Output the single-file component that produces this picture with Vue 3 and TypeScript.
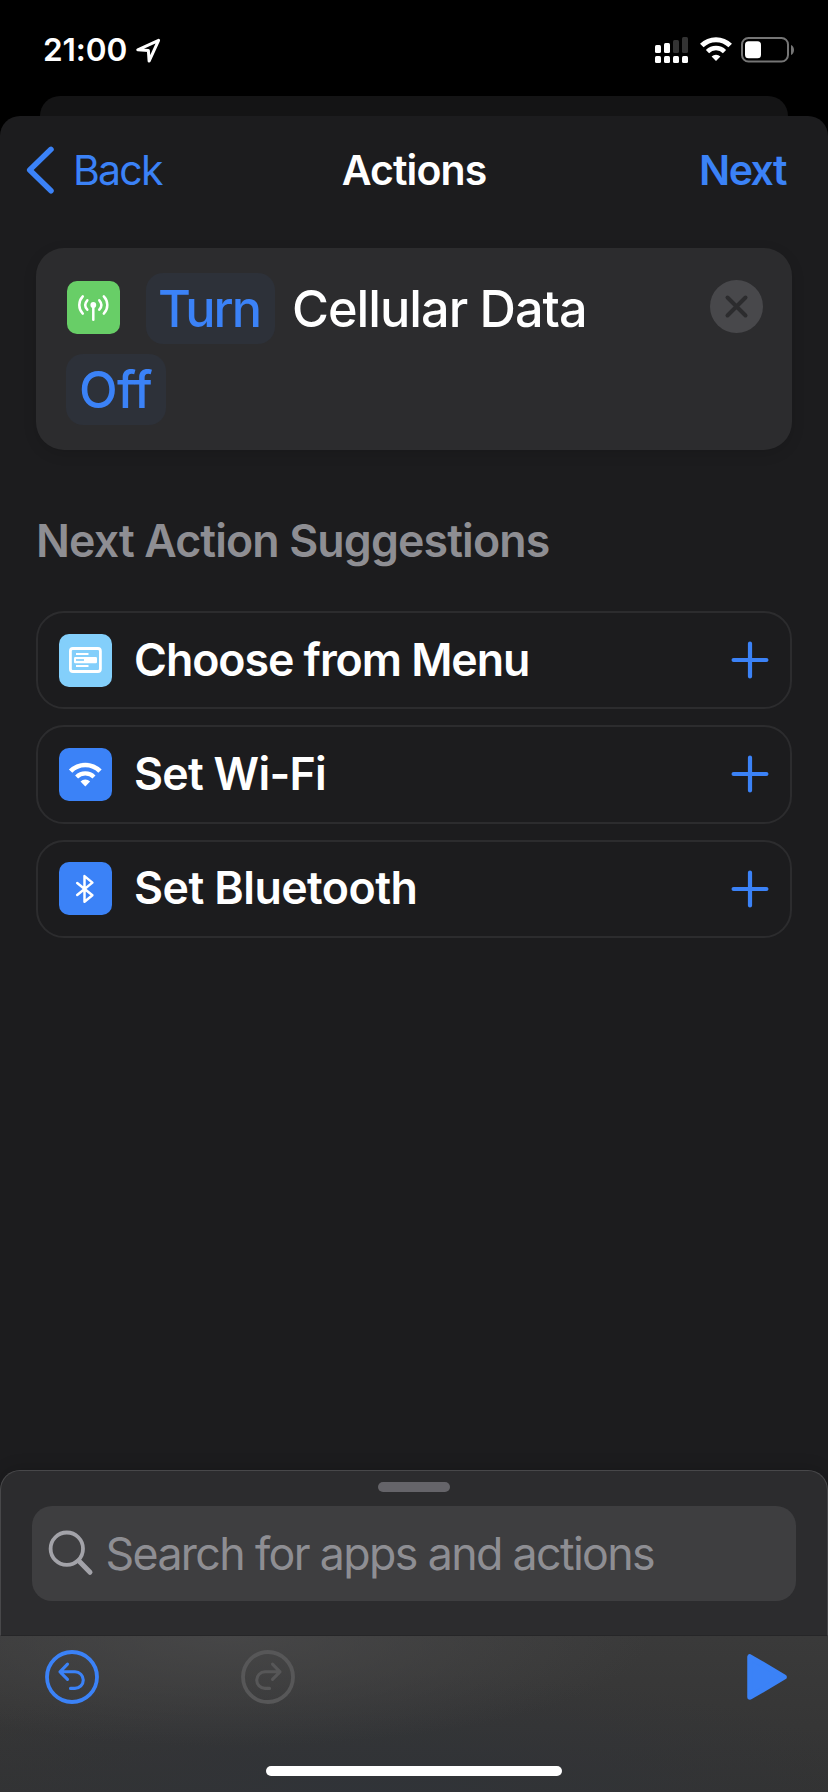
<script setup lang="ts">
type SuggestionIcon = 'menu' | 'wifi' | 'bluetooth'

interface Suggestion {
  id: SuggestionIcon
  label: string
}

const suggestions: Suggestion[] = [
  { id: 'menu', label: 'Choose from Menu' },
  { id: 'wifi', label: 'Set Wi-Fi' },
  { id: 'bluetooth', label: 'Set Bluetooth' },
]

// Four signal strength bars for each of the two SIM lines
const signalBars = [
  { height: 8, active: true },
  { height: 10, active: true },
  { height: 13, active: false },
  { height: 16, active: false },
]
</script>

<template>
  <div class="screen">
    <header class="status">
      <div class="status-left">
        <span class="time">21:00</span>
        <svg class="location" width="28" height="28" viewBox="0 0 28 28">
          <path d="M23.6 3.3 2.8 12.8l10.6.8.7 10.5z" fill="none" stroke="#fff" stroke-width="3" stroke-linejoin="round" />
        </svg>
      </div>
      <div class="status-right">
        <svg class="signal" width="33" height="26" viewBox="0 0 33 26">
          <g v-for="(bar, i) in signalBars" :key="i">
            <rect :x="i * 9" :y="16 - bar.height" width="6" :height="bar.height" rx="1.5" :fill="bar.active ? '#fff' : '#333'" />
            <rect :x="i * 9" y="19" width="6" height="7" rx="1.5" fill="#fff" />
          </g>
        </svg>
        <svg class="status-wifi" width="32" height="24" viewBox="0 0 32 24">
          <g fill="none" stroke="#fff">
            <path d="M1.8 8.6a20 20 0 0 1 28.4 0" stroke-width="5" />
            <path d="M7.5 14.6a12 12 0 0 1 17 0" stroke-width="4.5" />
          </g>
          <path d="M11.6 19.6a6.3 6.3 0 0 1 8.8 0L16 24z" fill="#fff" />
        </svg>
        <svg class="battery" width="54" height="26" viewBox="0 0 54 26">
          <rect x="1" y="1" width="46" height="23.5" rx="6.5" fill="none" stroke="#757575" stroke-width="2" />
          <rect x="4" y="4.3" width="16" height="17" rx="3.5" fill="#fff" />
          <path d="M50 8c4 1.5 4 8.5 0 10z" fill="#757575" />
        </svg>
      </div>
    </header>

    <div class="sheet-behind"></div>

    <main class="sheet">
      <nav class="nav">
        <button class="back">
          <svg width="30" height="50" viewBox="0 0 30 50">
            <path d="M26 4.3 4.7 25 26 45.8" fill="none" stroke="#3b82f7" stroke-width="5.5" stroke-linecap="round" stroke-linejoin="round" />
          </svg>
          <span>Back</span>
        </button>
        <h1 class="title">Actions</h1>
        <button class="next">Next</button>
      </nav>

      <section class="action-card">
        <div class="action-line">
          <svg class="action-icon" width="53" height="53" viewBox="0 0 53 53">
            <rect width="53" height="53" rx="10" fill="#68ce67" />
            <g fill="none" stroke="#fff" stroke-width="2.5" stroke-linecap="round">
              <path d="M15.8 15.3c-4.7 5-4.7 12.4 0 17.4M36.8 15.3c4.7 5 4.7 12.4 0 17.4" />
              <path d="M20.3 19.3c-2.7 3-2.7 6.4 0 9.4M32.3 19.3c2.7 3 2.7 6.4 0 9.4" />
              <path d="M26.3 24v14.7" />
            </g>
            <circle cx="26.3" cy="24" r="2.9" fill="#fff" />
          </svg>
          <button class="token turn">Turn</button>
          <span class="action-name">Cellular Data</span>
          <button class="remove">
            <svg width="53" height="53" viewBox="0 0 53 53">
              <circle cx="26.5" cy="26.5" r="26.5" fill="#48484b" />
              <path d="M17.5 17.5l18 18m0-18-18 18" stroke="#2c2c2e" stroke-width="4" stroke-linecap="round" />
            </svg>
          </button>
        </div>
        <div class="action-line">
          <button class="token off">Off</button>
        </div>
      </section>

      <h2 class="heading">Next Action Suggestions</h2>

      <ul class="suggestions">
        <li v-for="item in suggestions" :key="item.id" class="suggestion">
          <svg class="suggestion-icon" width="53" height="53" viewBox="0 0 53 53">
            <template v-if="item.id === 'menu'">
              <rect width="53" height="53" rx="10" fill="#83cffb" />
              <rect x="11.4" y="14.5" width="30" height="23" rx="2.5" fill="none" stroke="#fff" stroke-width="2.8" />
              <path d="M17 20h12.5M17 32h12.5" stroke="#fff" stroke-width="2" />
              <rect x="15" y="23" width="23" height="6.2" rx="1.2" fill="#fff" />
              <path d="M17 26h8" stroke="#83cffb" stroke-width="1.7" />
            </template>
            <template v-else-if="item.id === 'wifi'">
              <rect width="53" height="53" rx="10" fill="#3b82f7" />
              <g fill="none" stroke="#fff">
                <path d="M11.6 23.2a20.5 20.5 0 0 1 29.4 0" stroke-width="4.7" />
                <path d="M17.6 29a12.3 12.3 0 0 1 17.4 0" stroke-width="4.2" />
              </g>
              <path d="M21.5 33.6a6.8 6.8 0 0 1 9.6 0L26.3 38.4z" fill="#fff" />
            </template>
            <template v-else>
              <rect width="53" height="53" rx="10" fill="#3b82f7" />
              <path d="M18.2 21l15.2 12.2-7.9 6.5V14.1l7.9 6.5L18.2 33" fill="none" stroke="#fff" stroke-width="2.5" stroke-linecap="round" stroke-linejoin="round" />
            </template>
          </svg>
          <span class="suggestion-label" :class="item.id">{{ item.label }}</span>
          <svg class="plus" width="38" height="38" viewBox="0 0 38 38">
            <path d="M19 2.6v32.8M2.6 19h32.8" stroke="#3b82f7" stroke-width="4.2" stroke-linecap="round" />
          </svg>
        </li>
      </ul>
    </main>

    <section class="drawer">
      <div class="grabber"></div>
      <div class="search">
        <svg width="46" height="46" viewBox="0 0 46 46">
          <circle cx="18.8" cy="18.7" r="16.2" fill="none" stroke="#a3a3a9" stroke-width="3.8" />
          <path d="M31 31l11 11.3" stroke="#a3a3a9" stroke-width="5" stroke-linecap="round" />
        </svg>
        <span>Search for apps and actions</span>
      </div>
    </section>

    <footer class="toolbar">
      <div class="tools">
        <svg class="undo" width="54" height="54" viewBox="0 0 54 54" fill="none" stroke="#3b82f7" stroke-linecap="round" stroke-linejoin="round">
          <circle cx="27" cy="27" r="25" stroke-width="3.8" />
          <path d="M22.5 14.2 15 21.8l7.5 7.6M15 21.8h15a8.3 8.3 0 0 1 0 16.6h-4.5" stroke-width="3.1" />
        </svg>
        <svg class="redo" width="54" height="54" viewBox="0 0 54 54" fill="none" stroke="#575758" stroke-linecap="round" stroke-linejoin="round">
          <circle cx="27" cy="27" r="25" stroke-width="3.8" />
          <path d="M31.5 14.2l7.5 7.6-7.5 7.6M39 21.8H24a8.3 8.3 0 0 0 0 16.6h4.5" stroke-width="3.1" />
        </svg>
        <svg class="play" width="40" height="46" viewBox="0 0 40 46">
          <path d="M3 3v40l34-20z" fill="#3b82f7" stroke="#3b82f7" stroke-width="5.5" stroke-linejoin="round" />
        </svg>
      </div>
      <div class="home-indicator"></div>
    </footer>
  </div>
</template>

<style>
body {
  background: #000;
}
</style>

<style scoped>
.screen {
  width: 828px;
  height: 1792px;
  display: flex;
  flex-direction: column;
  overflow: hidden;
  background: #000;
  color: #fff;
  font-family: Inter, "Liberation Sans", sans-serif;
  white-space: nowrap;
}

svg {
  display: block;
  flex: none;
}

button {
  padding: 0;
  border: 0;
  background: none;
  color: #3b82f7;
  font: inherit;
  letter-spacing: inherit;
}

.status {
  height: 96px;
  display: flex;
  justify-content: space-between;
  align-items: flex-start;
  padding: 0 33px 0 43px;
}

.status-left {
  display: flex;
  padding-top: 30px;
}

.time {
  width: 92px;
  line-height: 40px;
  font-size: 31.6px;
  font-weight: 600;
  letter-spacing: -0.1px;
}

.location {
  margin-top: 6.5px;
}

.status-right {
  display: flex;
  padding-top: 37px;
}

.signal {
  margin-right: 12px;
}

.status-wifi {
  margin-right: 9px;
}

.sheet-behind {
  height: 20px;
  margin: 0 40px;
  border-radius: 20px 20px 0 0;
  background: #141415;
}

.sheet {
  height: 1374px;
  flex: none;
  display: flex;
  flex-direction: column;
  box-sizing: border-box;
  padding: 0 36px;
  border-radius: 20px 20px 0 0;
  background: #1c1c1e;
}

.nav {
  height: 107px;
  flex: none;
  display: grid;
  grid-template-columns: 1fr auto 1fr;
  align-items: center;
  margin: 0 -11px;
  font-size: 41px;
  line-height: 50px;
}

.back {
  display: flex;
  align-items: center;
  gap: 18px;
  letter-spacing: -1.76px;
}

.title {
  margin: 0;
  font-size: inherit;
  font-weight: 600;
  letter-spacing: -0.89px;
}

.next {
  justify-self: end;
  margin-right: 17px;
  font-weight: 600;
  letter-spacing: -1.5px;
}

.action-card {
  height: 202px;
  flex: none;
  display: flex;
  flex-direction: column;
  gap: 10px;
  margin-top: 25px;
  padding: 25px 29px 0 30px;
  box-sizing: border-box;
  border-radius: 28px;
  background: #2c2c2e;
  box-shadow: 0 4px 14px rgba(0, 0, 0, 0.12);
  font-size: 50.4px;
  font-weight: 500;
}

.action-line {
  height: 71px;
  display: flex;
  align-items: center;
}

.action-icon {
  margin: 0 26px 2px 1px;
}

.token {
  height: 71px;
  padding: 0 0 0 12px;
  border-radius: 17px;
  background: #2d3139;
  line-height: 71px;
  text-align: left;
}

.turn {
  width: 129px;
  letter-spacing: -1.97px;
}

.off {
  width: 100px;
  padding-left: 13px;
  letter-spacing: -0.6px;
}

.action-name {
  margin-left: 17px;
  letter-spacing: -0.99px;
}

.remove {
  margin: 0 0 4px auto;
}

.heading {
  margin: 61px 0 0;
  line-height: 60px;
  color: #8e8e93;
  font-size: 44.7px;
  font-weight: 600;
  letter-spacing: -0.88px;
}

.suggestions {
  display: flex;
  flex-direction: column;
  gap: 16.2px;
  margin: 39.8px 0 0;
  padding: 0;
  list-style: none;
}

.suggestion {
  height: 98.3px;
  display: flex;
  align-items: center;
  padding: 0 21px;
  box-sizing: border-box;
  border: 2px solid #2c2c2e;
  border-radius: 28px;
}

.suggestion:first-child .suggestion-icon {
  margin-top: 1px;
}

.suggestion-label {
  margin: 0 0 1px 22px;
  line-height: 60px;
  font-size: 44.7px;
  font-weight: 600;
}

.suggestion-label.menu {
  margin-bottom: 0;
  letter-spacing: -1.05px;
}

.suggestion-label.wifi {
  letter-spacing: -0.73px;
}

.suggestion-label.bluetooth {
  letter-spacing: -0.55px;
}

.plus {
  margin-left: auto;
}

/* Overlaps the sheet so its rounded corners sit on the sheet colour */
.drawer {
  height: 166px;
  flex: none;
  box-sizing: border-box;
  margin-top: -20px;
  padding: 0 31px;
  border: 1px solid #48484a;
  border-bottom-color: #262628;
  border-radius: 20px 20px 0 0;
  background: #2c2c2e;
  box-shadow: 0 -2px 16px rgba(0, 0, 0, 0.15);
}

.grabber {
  width: 72px;
  height: 10px;
  margin: 11px auto 14px;
  border-radius: 5px;
  background: #656469;
}

.search {
  height: 95px;
  display: flex;
  align-items: center;
  gap: 11.5px;
  padding-left: 16px;
  border-radius: 20px;
  background: #3e3e40;
  color: #8e8e93;
  font-size: 44.7px;
  letter-spacing: -1.63px;
}

.search svg {
  margin-bottom: 2px;
}

.toolbar {
  flex: 1;
  display: flex;
  flex-direction: column;
  justify-content: space-between;
  align-items: center;
  padding: 14px 0 16px;
  background:
    radial-gradient(ellipse 420px 110px at 230px 0, rgba(73, 73, 74, 0.8), rgba(73, 73, 74, 0)),
    radial-gradient(ellipse 520px 120px at 370px 156px, rgba(48, 51, 56, 0.95), rgba(48, 51, 56, 0)),
    linear-gradient(#3a3a3a, #333333);
}

.tools {
  width: 742px;
  display: flex;
  align-items: center;
  padding-left: 4px;
}

.redo {
  margin-left: 142px;
}

.play {
  margin-left: auto;
}

.home-indicator {
  width: 296px;
  height: 10px;
  border-radius: 5px;
  background: #fff;
}
</style>
